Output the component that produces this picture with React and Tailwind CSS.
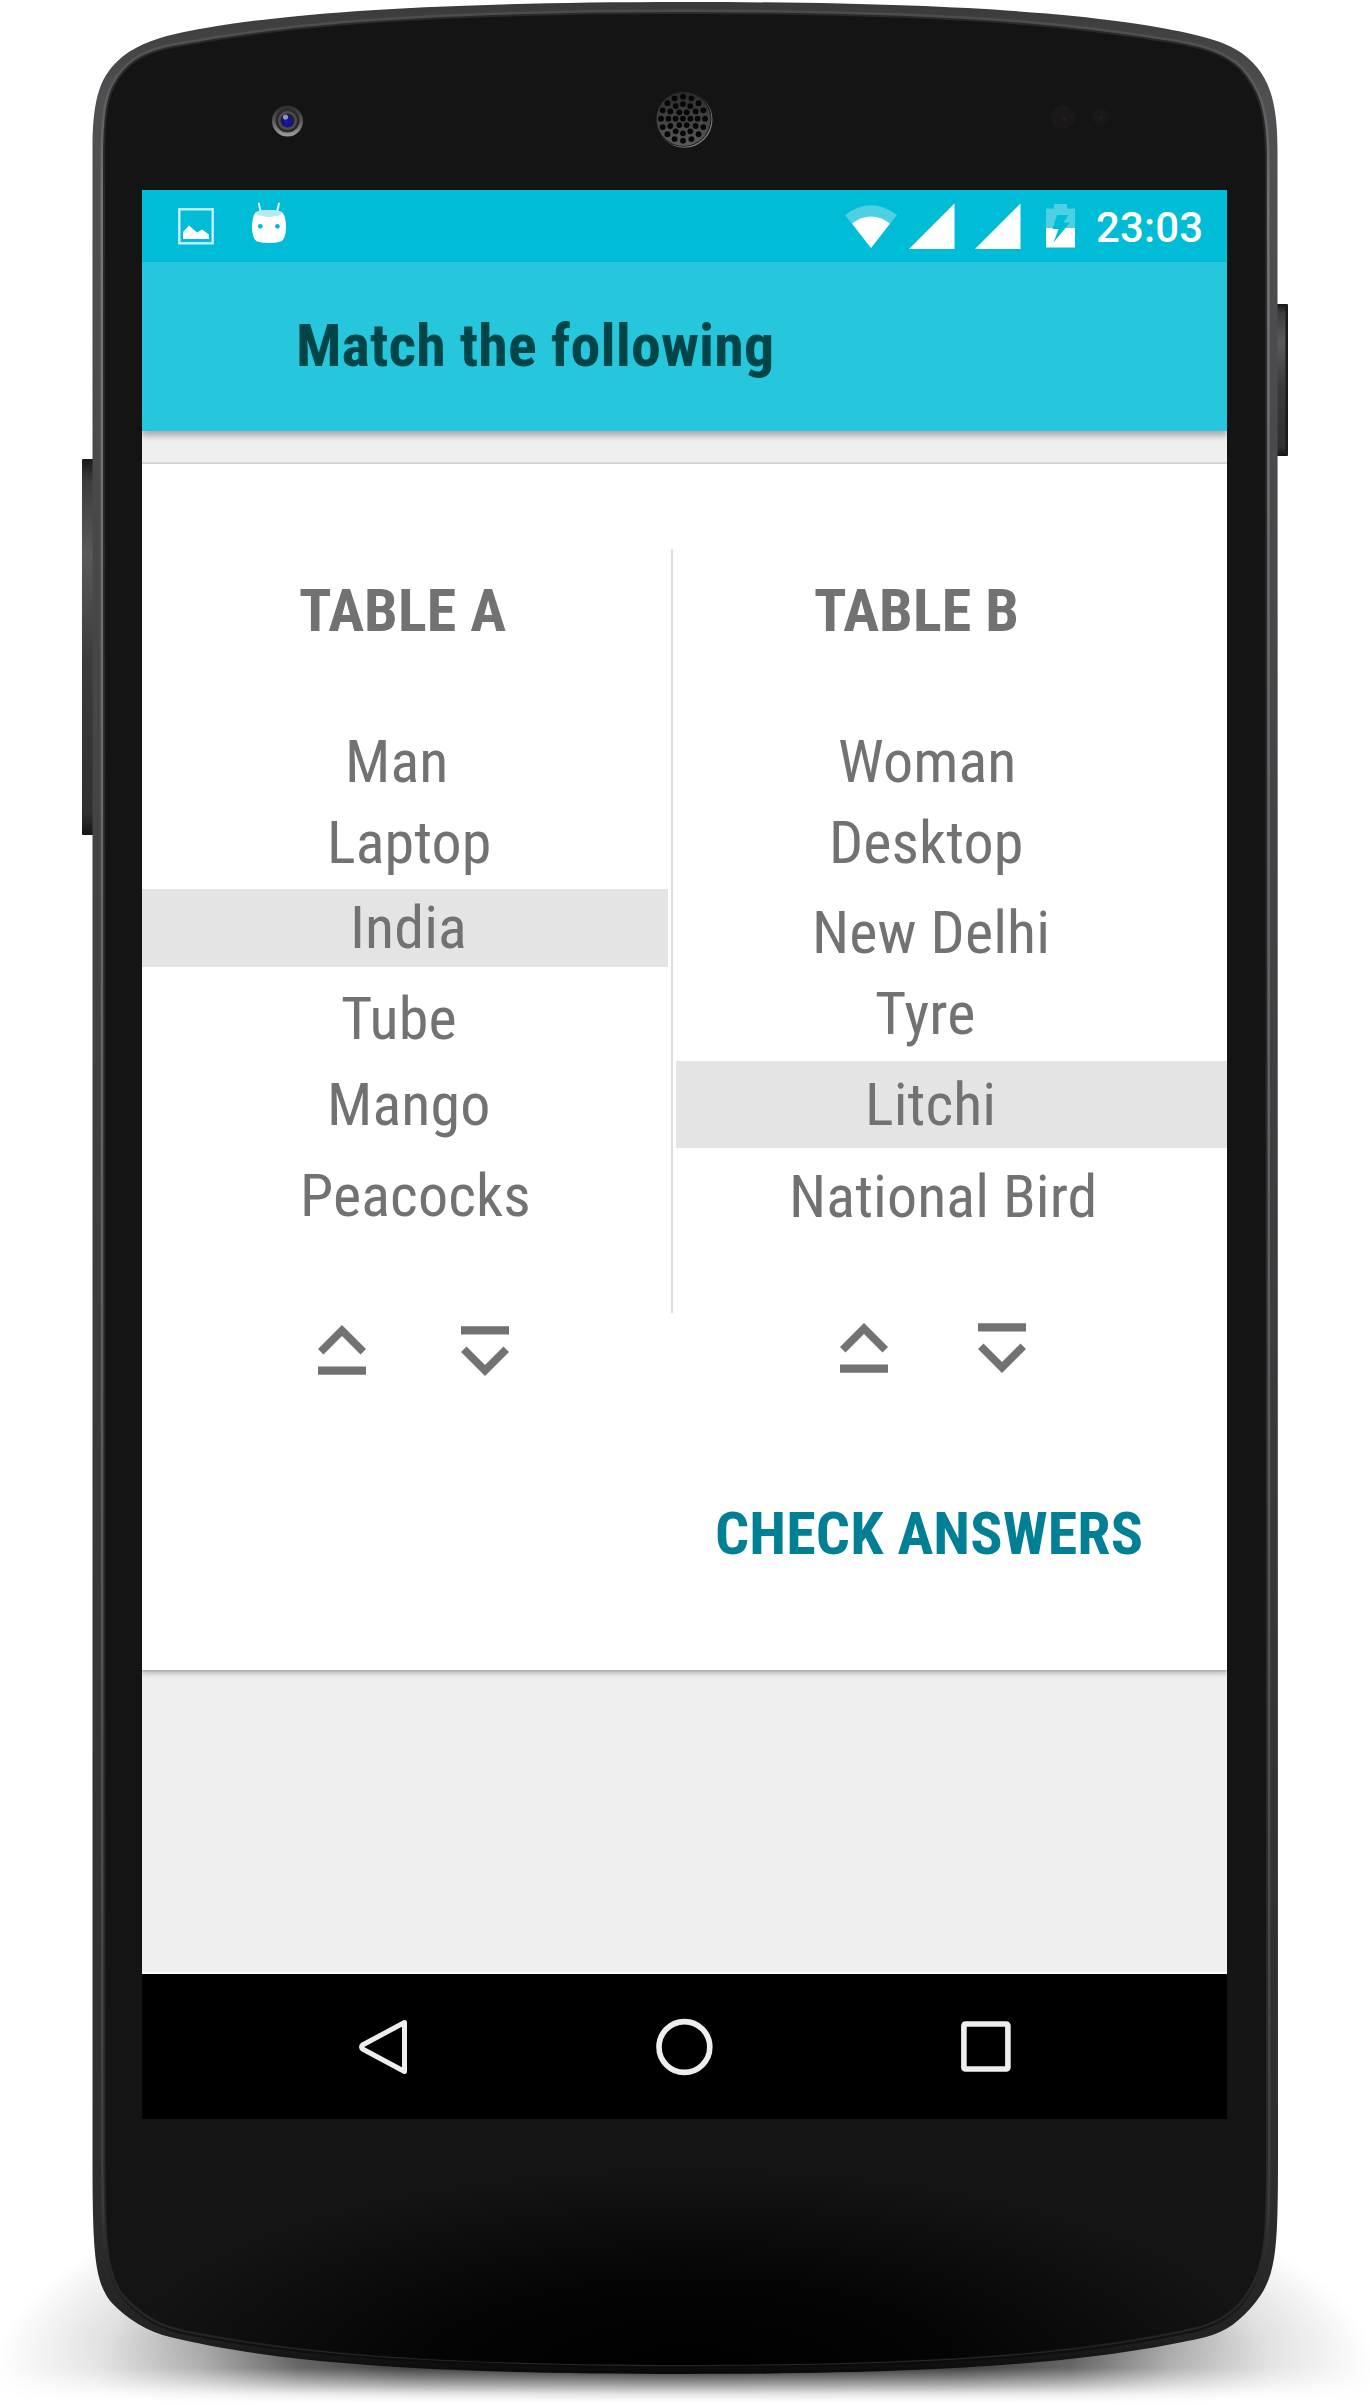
import React from "react";

/* Speaker perforations: concentric rings of [hole count, radius]. */
const speakerHoles = [
  [1, 0],
  [6, 7.4],
  [12, 14.6],
  [16, 22],
].flatMap(([count, radius]) =>
  Array.from({ length: count }, (_, i) => {
    const angle = (i * 2 * Math.PI) / count + (count === 6 ? 0 : 0);
    return [683 + radius * Math.cos(angle), 118.7 + radius * Math.sin(angle)];
  })
);

const outerBody =
  "M92.5 150 C92.5 95 101 75 122 57 C140 43 160 37 184 32 C240 21 358 2 685 2 C1010 2 1122 20 1178 31 C1210 38 1228 43 1243 54 C1268 73 1277.5 98 1277.5 150 L1278 2150 C1278 2250 1277 2275 1255 2303 C1240 2321 1226 2332 1206 2337 C1100 2361 960 2374 685 2374 C410 2374 270 2361 170 2337 C148 2332 127 2319 111 2302 C94 2281 92.5 2250 92.5 2150 Z";
const innerGlass =
  "M104 160 C104 105 109 88 124 71 C138 55 158 49 184 45 C250 33 370 13 685 13 C1000 13 1110 32 1176 43 C1210 49 1226 56 1240 69 C1257 88 1266 108 1266 160 L1267 2150 C1267 2240 1265 2266 1248 2292 C1236 2312 1216 2323 1197 2328 C1090 2352 950 2365 685 2365 C420 2365 280 2351 180 2330 C157 2325 138 2313 122 2294 C106 2272 104.5 2240 104.5 2150 Z";

function Device() {
  return (
    <svg className="absolute inset-0" width="1370" height="2405" viewBox="0 0 1370 2405" aria-hidden="true">
      <defs>
        <linearGradient id="rim" x1="0" y1="0" x2="0" y2="1">
          <stop offset="0" stopColor="#3a3a3b" />
          <stop offset="0.04" stopColor="#505052" />
          <stop offset="0.5" stopColor="#3d3d3f" />
          <stop offset="0.94" stopColor="#2c2c2d" />
          <stop offset="0.985" stopColor="#222222" />
          <stop offset="1" stopColor="#090909" />
        </linearGradient>
        <linearGradient id="edge" x1="0" y1="0" x2="0" y2="1">
          <stop offset="0" stopColor="#4c4c4e" />
          <stop offset="0.08" stopColor="#747478" />
          <stop offset="0.6" stopColor="#5d5d60" />
          <stop offset="0.93" stopColor="#3c3c3e" />
          <stop offset="1" stopColor="#0b0b0b" />
        </linearGradient>
        <radialGradient id="glassShade" gradientUnits="userSpaceOnUse" cx="0" cy="0" r="1" gradientTransform="translate(690 2375) scale(580 205)">
          <stop offset="0" stopColor="#000" />
          <stop offset="0.45" stopColor="#000" stopOpacity="0.8" />
          <stop offset="1" stopColor="#000" stopOpacity="0" />
        </radialGradient>
        <radialGradient id="floor" gradientUnits="userSpaceOnUse" cx="0" cy="0" r="1" gradientTransform="translate(685 2372) scale(690 235)">
          <stop offset="0" stopColor="#000" stopOpacity="0.95" />
          <stop offset="0.4" stopColor="#000" stopOpacity="0.85" />
          <stop offset="0.56" stopColor="#000" stopOpacity="0.68" />
          <stop offset="0.7" stopColor="#000" stopOpacity="0.36" />
          <stop offset="0.85" stopColor="#000" stopOpacity="0.12" />
          <stop offset="1" stopColor="#000" stopOpacity="0" />
        </radialGradient>
        <linearGradient id="floorFade" gradientUnits="userSpaceOnUse" x1="0" y1="2340" x2="0" y2="2402">
          <stop offset="0" stopColor="#fff" />
          <stop offset="0.45" stopColor="#ddd" />
          <stop offset="0.72" stopColor="#666" />
          <stop offset="0.88" stopColor="#1a1a1a" />
          <stop offset="1" stopColor="#000" />
        </linearGradient>
        <mask id="floorMask" maskUnits="userSpaceOnUse" x="0" y="2100" width="1370" height="305">
          <rect x="0" y="2100" width="1370" height="305" fill="url(#floorFade)" />
        </mask>
        <linearGradient id="button" x1="0" y1="0" x2="0" y2="1">
          <stop offset="0" stopColor="#191919" />
          <stop offset="0.06" stopColor="#3c3c3d" />
          <stop offset="0.25" stopColor="#5a5a5b" />
          <stop offset="0.55" stopColor="#3a3a3b" />
          <stop offset="0.94" stopColor="#303030" />
          <stop offset="1" stopColor="#151515" />
        </linearGradient>
        <linearGradient id="cameraRing" x1="0" y1="0" x2="0" y2="1">
          <stop offset="0" stopColor="#2c2c2c" />
          <stop offset="0.5" stopColor="#5c5856" />
          <stop offset="1" stopColor="#a09e9c" />
        </linearGradient>
        <radialGradient id="lens" cx="0.45" cy="0.65" r="0.6">
          <stop offset="0" stopColor="#1414c8" />
          <stop offset="0.6" stopColor="#17176c" />
          <stop offset="1" stopColor="#20202e" />
        </radialGradient>
        <linearGradient id="mesh" x1="0" y1="0" x2="0" y2="1">
          <stop offset="0" stopColor="#2a2a2a" />
          <stop offset="1" stopColor="#5a5a5a" />
        </linearGradient>
      </defs>

      <rect x="0" y="2100" width="1370" height="305" fill="url(#floor)" mask="url(#floorMask)" />
      <rect x="82" y="459" width="14" height="376" rx="1" fill="url(#button)" />
      <rect x="1274" y="304" width="14" height="152" rx="1" fill="url(#button)" />
      <rect x="1285.500" y="306" width="2.500" height="148" fill="#1b1b1b" />
      <path d={outerBody} fill="url(#rim)" />
      <path d={innerGlass} fill="#141414" stroke="url(#edge)" strokeWidth="7" />
      <path d={innerGlass} fill="#141414" stroke="#29292a" strokeWidth="2" />
      <path d={innerGlass} fill="url(#glassShade)" />

      <circle cx="287.500" cy="121" r="15.500" fill="url(#cameraRing)" />
      <circle cx="287.500" cy="120.500" r="12" fill="#2b2929" />
      <circle cx="287.500" cy="120.500" r="9.500" fill="#4e4c4c" />
      <circle cx="287.500" cy="120.500" r="7" fill="url(#lens)" />
      <circle cx="285.500" cy="117" r="2.600" fill="#8d95b8" />

      <circle cx="684.500" cy="119.800" r="28" fill="#7b7b7b" />
      <circle cx="683.500" cy="118.800" r="28" fill="#151515" />
      <circle cx="683.500" cy="119" r="27" fill="url(#mesh)" />
      {speakerHoles.map(([cx, cy], i) => (
        <circle key={i} cx={cx} cy={cy} r="2.900" fill="#060606" />
      ))}

      <circle cx="1063" cy="117" r="12" fill="#1a1818" />
      <circle cx="1064.500" cy="119" r="1.800" fill="#2e1f17" />
      <circle cx="1101" cy="117" r="8" fill="#1a1818" />
      <circle cx="1101" cy="117.500" r="1.600" fill="#2e1f17" />
    </svg>
  );
}

function StatusBar() {
  return (
    <div className="flex h-[72px] items-start bg-[#00bcd7] text-white">
      <svg className="mt-[18px] ml-9" width="36" height="37" viewBox="0 0 36 37">
        <rect x="1.300" y="1.300" width="33.400" height="34" fill="none" stroke="#c8f0f6" strokeWidth="2.400" />
        <path d="M5 31V24l6-6.500 8 7 5-3 7 5V31z" fill="#fff" />
      </svg>
      <svg className="mt-3 ml-[37px]" width="36" height="43" viewBox="0 0 36 43">
        <path d="M7.800 1.500 10 11M28 1.500 25.800 11" stroke="#dff6f9" strokeWidth="2" strokeLinecap="round" />
        <path d="M5 10Q18 6 31 10Q35 14 35 26Q34.500 37 30 39.500Q18 42.500 6 39.500Q1.500 37 1 26Q1 14 5 10Z" fill="#fff" />
        <path d="M5 10Q18 6 31 10Q31 14 24 14Q18 16 12 14Q5 14 5 10Z" fill="#b6eaf2" />
        <circle cx="9.300" cy="24.300" r="2.400" fill="#00bcd7" />
        <circle cx="26.400" cy="24.300" r="2.400" fill="#00bcd7" />
      </svg>
      <svg className="mt-[15px] ml-[558px]" width="52" height="44" viewBox="0 0 52 44">
        <path d="M0 10Q26-9.500 52 10L26 43z" fill="#4dd0e2" />
        <path d="M7 18.500Q26 4.500 45 18.500L26 43z" fill="#fff" />
      </svg>
      <svg className="mt-[13px] ml-3" width="46" height="46" viewBox="0 0 46 46">
        <path d="M45.500.500V46H0z" fill="#fff" />
      </svg>
      <svg className="mt-[13px] ml-5" width="46" height="46" viewBox="0 0 46 46">
        <path d="M45.500.500V46H0z" fill="#fff" />
      </svg>
      <svg className="mt-3.5 ml-[25px]" width="29" height="44" viewBox="0 0 29 44">
        <path d="M8 0H21V4.500H29V24H0V4.500H8z" fill="#4dd0e2" />
        <path d="M0 24H29V43.500H0z" fill="#fff" />
        <path d="M11 11H22.500L17.500 18.500H24L7.500 38.500L12.500 25H6.500z" fill="#00bcd7" />
      </svg>
      <span className="mt-[17px] ml-[21px] text-[42px] leading-[42px] font-medium [font-family:Roboto,sans-serif]">23:03</span>
    </div>
  );
}

function StepIcon({ className }) {
  return (
    <svg className={className} width="48" height="50" viewBox="0 0 48 50" fill="#727272">
      <path d="M24 0 48 24 42.500 29.500 24 11 5.500 29.500 0 24z" />
      <path d="M0 41.500H48V49.700H0z" />
    </svg>
  );
}

const tableA = [
  { text: "Man", row: "mt-[91px] h-[60px] pl-[203px]" },
  { text: "Laptop", row: "mt-[21px] h-[60px] pl-[185px]" },
  { text: "India", row: "mt-4 h-[78px] bg-[#e4e4e4] pl-[208px]" },
  { text: "Tube", row: "mt-[22px] h-[60px] pl-[199px]" },
  { text: "Mango", row: "mt-[26px] h-[60px] pl-[185px]" },
  { text: "Peacocks", row: "mt-[31px] h-[60px] pl-[158px]" },
];

const tableB = [
  { text: "Woman", row: "mt-[91px] h-[60px] pl-[162px]" },
  { text: "Desktop", row: "mt-[21px] h-[60px] pl-[153px]" },
  { text: "New Delhi", row: "mt-[30px] h-[60px] pl-[136px]" },
  { text: "Tyre", row: "mt-[21px] h-[60px] pl-[199px]" },
  { text: "Litchi", row: "mt-[17px] h-[87px] bg-[#e4e4e4] pl-[189px]" },
  { text: "National Bird", row: "mt-[19px] h-[60px] pl-[113px]" },
];

function Rows({ items }) {
  return items.map(({ text, row }) => (
    <div key={text} className={"flex items-center whitespace-nowrap " + row}>
      {text}
    </div>
  ));
}

export default function App() {
  return (
    <main className="relative h-[2405px] w-[1370px] overflow-hidden bg-white [font-family:'Roboto_Condensed',Roboto,sans-serif] text-[60px] leading-[60px] tracking-[0.12px] text-[#727272]">
      <Device />
      <div className="relative mt-[190px] ml-[142px] flex h-[1929px] w-[1085px] flex-col overflow-hidden bg-[#efefef]">
        <StatusBar />
        <header className="h-[169px] bg-[#26c6dc] pt-[54px] pl-[154px] font-bold text-[#004547] shadow-[0_5px_6px_rgba(0,0,0,0.28)]">
          <h1>Match the following</h1>
        </header>

        <section className="mt-[33px] h-[1206px] bg-white shadow-[0_0_2px_1px_rgba(0,0,0,0.18),0_4px_5px_rgba(0,0,0,0.2)]">
          <div className="flex h-[936px]">
            <div className="w-[526px] pt-[117px]">
              <h2 className="pl-[157px] font-bold">TABLE A</h2>
              <Rows items={tableA} />
              <div className="mt-[99px] flex pl-[176px]">
                <StepIcon />
                <StepIcon className="mt-px ml-[95px] rotate-180" />
              </div>
            </div>
            <div className="mt-[85px] ml-[3px] h-[764px] w-[2px] bg-[#dedede]" />
            <div className="ml-[3px] flex-1 pt-[117px]">
              <h2 className="pl-[138px] font-bold">TABLE B</h2>
              <Rows items={tableB} />
              <div className="mt-[96px] flex pl-[164px]">
                <StepIcon />
                <StepIcon className="ml-[90px] rotate-180" />
              </div>
            </div>
          </div>
          <button className="mt-[104px] ml-[573px] block font-bold tracking-[0.12px] whitespace-nowrap text-[#007f95]">CHECK ANSWERS</button>
        </section>

        <nav className="mt-auto h-[147px] border-t-2 border-white bg-black">
          <div className="flex items-start pt-[44px]">
            <svg className="ml-[216px]" width="50" height="58" viewBox="0 0 50 58">
              <path d="M46.500 4.500V53.500L4.500 31Q2.500 29 4.500 27z" fill="none" stroke="#eee" strokeWidth="5" strokeLinejoin="round" />
            </svg>
            <svg className="ml-[248px]" width="57" height="58" viewBox="0 0 57 58">
              <circle cx="28.400" cy="29" r="25.400" fill="none" stroke="#eee" strokeWidth="5.600" />
            </svg>
            <svg className="ml-[248px]" width="50" height="58" viewBox="0 0 50 58">
              <rect x="2.900" y="6" width="44" height="45" rx="1.500" fill="none" stroke="#eee" strokeWidth="5.600" />
            </svg>
          </div>
        </nav>
      </div>
    </main>
  );
}
